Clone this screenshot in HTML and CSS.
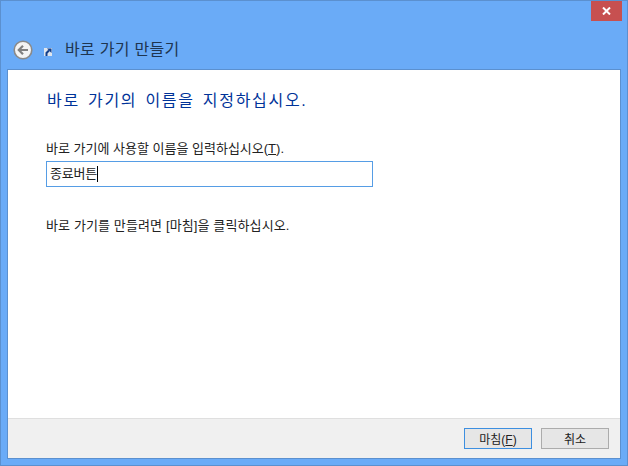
FILE: index.html
```html
<!DOCTYPE html>
<html lang="ko">
<head>
    <meta charset="UTF-8">
    <title>바로 가기 만들기</title>
    <link rel="stylesheet" href="styles.css">
</head>
<body>
    <div class="window">
        <div class="titlebar">
            <div class="close">
                <svg width="9" height="8" viewBox="0 0 9 8"><path d="M1 0.5 L8 7.5 M8 0.5 L1 7.5" stroke="#fff" stroke-width="2" fill="none"/></svg>
            </div>
        </div>
        <div class="nav">
            <div class="back">
                <svg width="20" height="20" viewBox="0 0 20 20">
                    <circle cx="10" cy="10" r="8.8" fill="#f4f4f4" stroke="#8a8a8a" stroke-width="1.6"/>
                    <path d="M15 10 H6 M10 5.8 L5.8 10 L10 14.2" stroke="#808080" stroke-width="2.2" fill="none"/>
                </svg>
            </div>
            <svg class="shortcut" width="8" height="8" viewBox="0 0 8 8">
                <rect x="0" y="0" width="8" height="8" fill="#dfe6ee"/>
                <path d="M2.5 8 V5 L5 2.5" stroke="#123f8c" stroke-width="2" fill="none"/>
                <path d="M3 0.5 H7.5 V5 Z" fill="#123f8c"/>
            </svg>
            <span class="nav-title">바로 가기 만들기</span>
        </div>
        <div class="panel">
            <div class="body">
                <h1 class="heading">바로 가기의 이름을 지정하십시오.</h1>
                <label class="label" for="name">바로 가기에 사용할 이름을 입력하십시오(<u>T</u>).</label>
                <div class="input" id="name">종료버튼<span class="caret"></span></div>
                <p class="hint">바로 가기를 만들려면 [마침]을 클릭하십시오.</p>
            </div>
            <div class="footer">
                <button class="btn btn-default" type="button">마침(<u>F</u>)</button>
                <button class="btn" type="button">취소</button>
            </div>
        </div>
    </div>
</body>
</html>
```

FILE: styles.css
```css
html, body {
    margin: 0;
    padding: 0;
}
body {
    font-family: "Liberation Sans", "Noto Sans CJK KR", sans-serif;
    font-size: 13px;
    color: #222;
}
.window {
    width: 628px;
    height: 466px;
    box-sizing: border-box;
    background: #6aabf7;
    border: 1px solid #5b90cf;
    display: flex;
    flex-direction: column;
    padding: 0 6px 6px 6px;
    overflow: hidden;
}
.titlebar {
    height: 20px;
    margin-right: -1px;
    display: flex;
    justify-content: flex-end;
    flex: none;
}
.close {
    width: 31px;
    height: 20px;
    background: #c75050;
    display: flex;
    align-items: center;
    justify-content: center;
}
.nav {
    height: 48px;
    flex: none;
    display: flex;
    align-items: center;
    padding-left: 6px;
    padding-top: 10px;
    box-sizing: border-box;
}
.back {
    width: 20px;
    height: 20px;
    display: flex;
}
.shortcut {
    margin-left: 11px;
    margin-top: 4px;
}
.nav-title {
    margin-left: 13px;
    margin-bottom: 4px;
    font-size: 16px;
    letter-spacing: 0.3px;
    color: #1e3550;
}
.panel {
    flex: 1;
    background: #fff;
    border: 1px solid #5b90cf;
    display: flex;
    flex-direction: column;
    min-height: 0;
}
.body {
    flex: 1;
    padding: 21px 38px 0 38px;
}
.heading {
    margin: 0 0 0 1px;
    font-size: 16px;
    font-weight: 400;
    letter-spacing: 1.7px;
    word-spacing: 2px;
    line-height: 20px;
    color: #003399;
}
.label {
    display: block;
    margin-top: 30px;
    line-height: 16px;
}
.input {
    width: 327px;
    height: 26px;
    margin-top: 4px;
    box-sizing: border-box;
    border: 1px solid #569de5;
    padding-left: 3px;
    letter-spacing: -0.2px;
    line-height: 20px;
    display: flex;
    align-items: center;
}
.caret {
    width: 1px;
    height: 16px;
    background: #000;
}
.hint {
    margin: 31px 0 0;
    letter-spacing: 0.12px;
    line-height: 16px;
}
.footer {
    height: 40px;
    flex: none;
    box-sizing: border-box;
    background: #f0f0f0;
    border-top: 1px solid #dfdfdf;
    display: flex;
    justify-content: flex-end;
    align-items: center;
    gap: 9px;
    padding-right: 11px;
}
.btn {
    width: 68px;
    height: 21px;
    padding: 0;
    font: inherit;
    font-size: 12px;
    color: #222;
    background: #e6e6e6;
    border: 1px solid #acacac;
    border-radius: 0;
}
.btn-default {
    border-color: #3d8fe0;
}
```
